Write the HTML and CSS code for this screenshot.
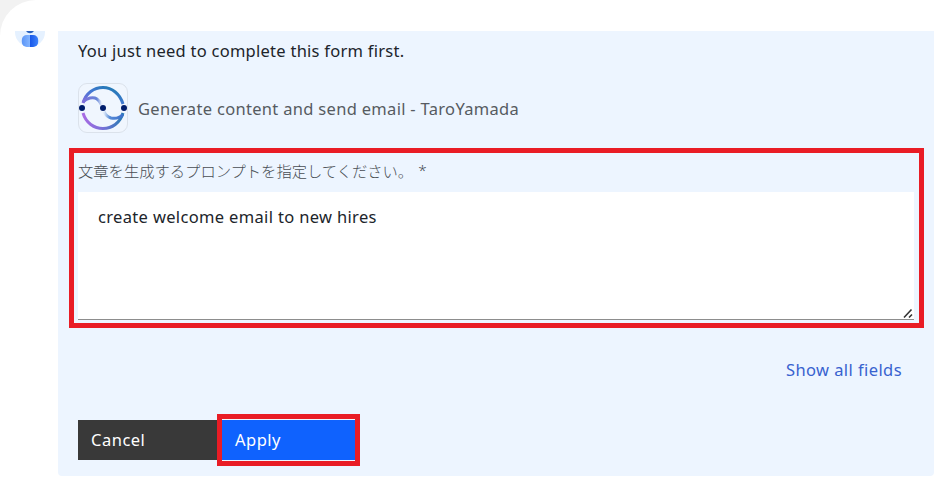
FILE: index.html
```html
<!DOCTYPE html>
<html lang="en">
<head>
<meta charset="utf-8">
<title>Generate content and send email</title>
<link rel="stylesheet" href="styles.css">
</head>
<body>
<main class="chat">
  <div class="message">
    <svg class="avatar" width="30" height="18" viewBox="0 0 30 18" aria-hidden="true">
      <defs>
        <linearGradient id="bot" x1="0" x2="1"><stop offset="0" stop-color="#5b95f7"/><stop offset=".48" stop-color="#82b4ff"/><stop offset=".49" stop-color="#1756e8"/><stop offset="1" stop-color="#3e82fa"/></linearGradient>
      </defs>
      <circle cx="15" cy="1" r="15" fill="#e5f1ff"/>
      <path d="M11 0h8q-1.500 2.200-4 2.200T11 0z" fill="#2860bd"/>
      <rect x="6.800" y="4" width="16.400" height="12" rx="5" fill="url(#bot)"/>
    </svg>
    <section class="panel">
      <p class="intro"><span>You just need to complete this form first.</span></p>
      <div class="skill">
        <svg class="skill-icon" width="50" height="50" viewBox="0 0 50 50" aria-hidden="true">
          <defs>
            <linearGradient id="top" x1="0" y1="1" x2="1" y2="0"><stop offset="0" stop-color="#8a69df"/><stop offset=".5" stop-color="#4178d2"/><stop offset="1" stop-color="#167aa8"/></linearGradient>
            <linearGradient id="bottom" x1="0" y1="0" x2="1" y2="0"><stop offset="0" stop-color="#a96be3"/><stop offset=".5" stop-color="#7771d8"/><stop offset="1" stop-color="#267bb3"/></linearGradient>
            <linearGradient id="tailA" x1="0" x2="1"><stop offset="0" stop-color="#7e6fda"/><stop offset=".75" stop-color="#6585d7"/><stop offset="1" stop-color="#6585d7" stop-opacity=".1"/></linearGradient>
            <linearGradient id="tailB" x1="0" x2="1"><stop offset="0" stop-color="#568bd7" stop-opacity=".1"/><stop offset=".3" stop-color="#568bd7"/><stop offset="1" stop-color="#3c6fca"/></linearGradient>
          </defs>
          <rect x=".5" y=".5" width="49" height="49" rx="8.500" fill="#f0f6fe" stroke="#dbe2eb"/>
          <g fill="none" stroke-width="3">
            <path d="M5 20C8 10 16 4.500 25 4.500S42 11 45 21" stroke="url(#top)"/>
            <path d="M5 30C8 40 16 45.500 25 45.500S42 40 45 30" stroke="url(#bottom)"/>
            <path d="M5 19C9 15 15 13.500 19 16Q22 18 23.500 22" stroke="url(#tailA)"/>
            <path d="M26 28.500Q28 33.500 33 35Q40 36.500 45 31.500" stroke="url(#tailB)"/>
          </g>
          <g fill="#001d6c"><circle cx="4" cy="25" r="3"/><circle cx="25" cy="25" r="3"/><circle cx="46" cy="25" r="3"/></g>
        </svg>
        <span class="skill-name">Generate content and send email - TaroYamada</span>
      </div>
      <div class="field">
        <div class="label"><span class="label-text">文章を生成するプロンプトを指定してください。</span><span class="required">*</span></div>
        <div class="input">
          <span class="input-text">create welcome email to new hires</span>
          <svg class="grip" width="11" height="11" viewBox="0 0 11 11" aria-hidden="true"><path d="M1 9.500 8.500 1.500M6 9.500l3-3" stroke="#333" stroke-width="1.600" fill="none"/></svg>
        </div>
      </div>
      <div class="more"><span class="more-link">Show all fields</span></div>
      <div class="actions">
        <div class="button cancel"><span class="cancel-text">Cancel</span></div>
        <div class="button apply"><span class="apply-text">Apply</span></div>
      </div>
    </section>
  </div>
</main>
</body>
</html>
```
FILE: styles.css
```css
* { box-sizing: border-box; }
body {
  margin: 0;
  height: 487px;
  overflow: hidden;
  background: #f2f2f2;
  color: #20242a;
  font: 16.5px/24px "Noto Sans", "Noto Sans CJK JP", sans-serif;
}
.chat {
  height: 487px;
  padding: 31px 13px 0 15px;
  background: #fff;
  border-top-left-radius: 36px;
}
.message { display: flex; align-items: flex-start; gap: 13px; }
.avatar { display: block; flex: none; }
.panel {
  flex: 1;
  height: 445px;
  padding: 8px 10px 0 11px;
  background: #edf5ff;
  border-radius: 0 0 4px 4px;
}
.intro { margin: 0 0 0 9px; height: 24px; letter-spacing: .26px; }
.skill {
  display: flex;
  align-items: center;
  gap: 10px;
  height: 50px;
  margin: 20px 0 15px 9px;
  color: #565b61;
}
.skill-icon { flex: none; }
.skill-name { padding-top: 2px; letter-spacing: .31px; }
.field {
  height: 180px;
  padding: 5px 5px 4px 4px;
  border: 5px solid #e91c25;
}
.label {
  display: flex;
  gap: 5px;
  height: 34px;
  color: #484d53;
  font: 300 15.300px/24px "Noto Sans CJK JP", sans-serif;
}
.required { font-family: "Noto Sans", sans-serif; }
.input {
  display: flex;
  justify-content: space-between;
  height: 128px;
  padding: 13px 0 0 20px;
  background: #fff;
  border-bottom: 1px solid #8d8d8d;
  letter-spacing: .34px;
}
.grip { align-self: flex-end; }
.more {
  display: flex;
  justify-content: flex-end;
  height: 24px;
  margin: 30px 22px 32px 0;
  color: #3862cf;
  letter-spacing: .42px;
}
.actions { display: flex; align-items: center; height: 52px; margin-left: 9px; }
.button { display: flex; align-items: center; color: #fff; letter-spacing: .5px; }
.cancel { width: 139px; height: 40px; padding-left: 13px; background: #393939; }
.apply {
  width: 143px;
  height: 52px;
  padding-left: 13px;
  border: 5px solid #e91c25;
  background: #0f62fe;
  box-shadow: inset 0 1px #edf5ff, inset 0 -1px #edf5ff;
}
```
